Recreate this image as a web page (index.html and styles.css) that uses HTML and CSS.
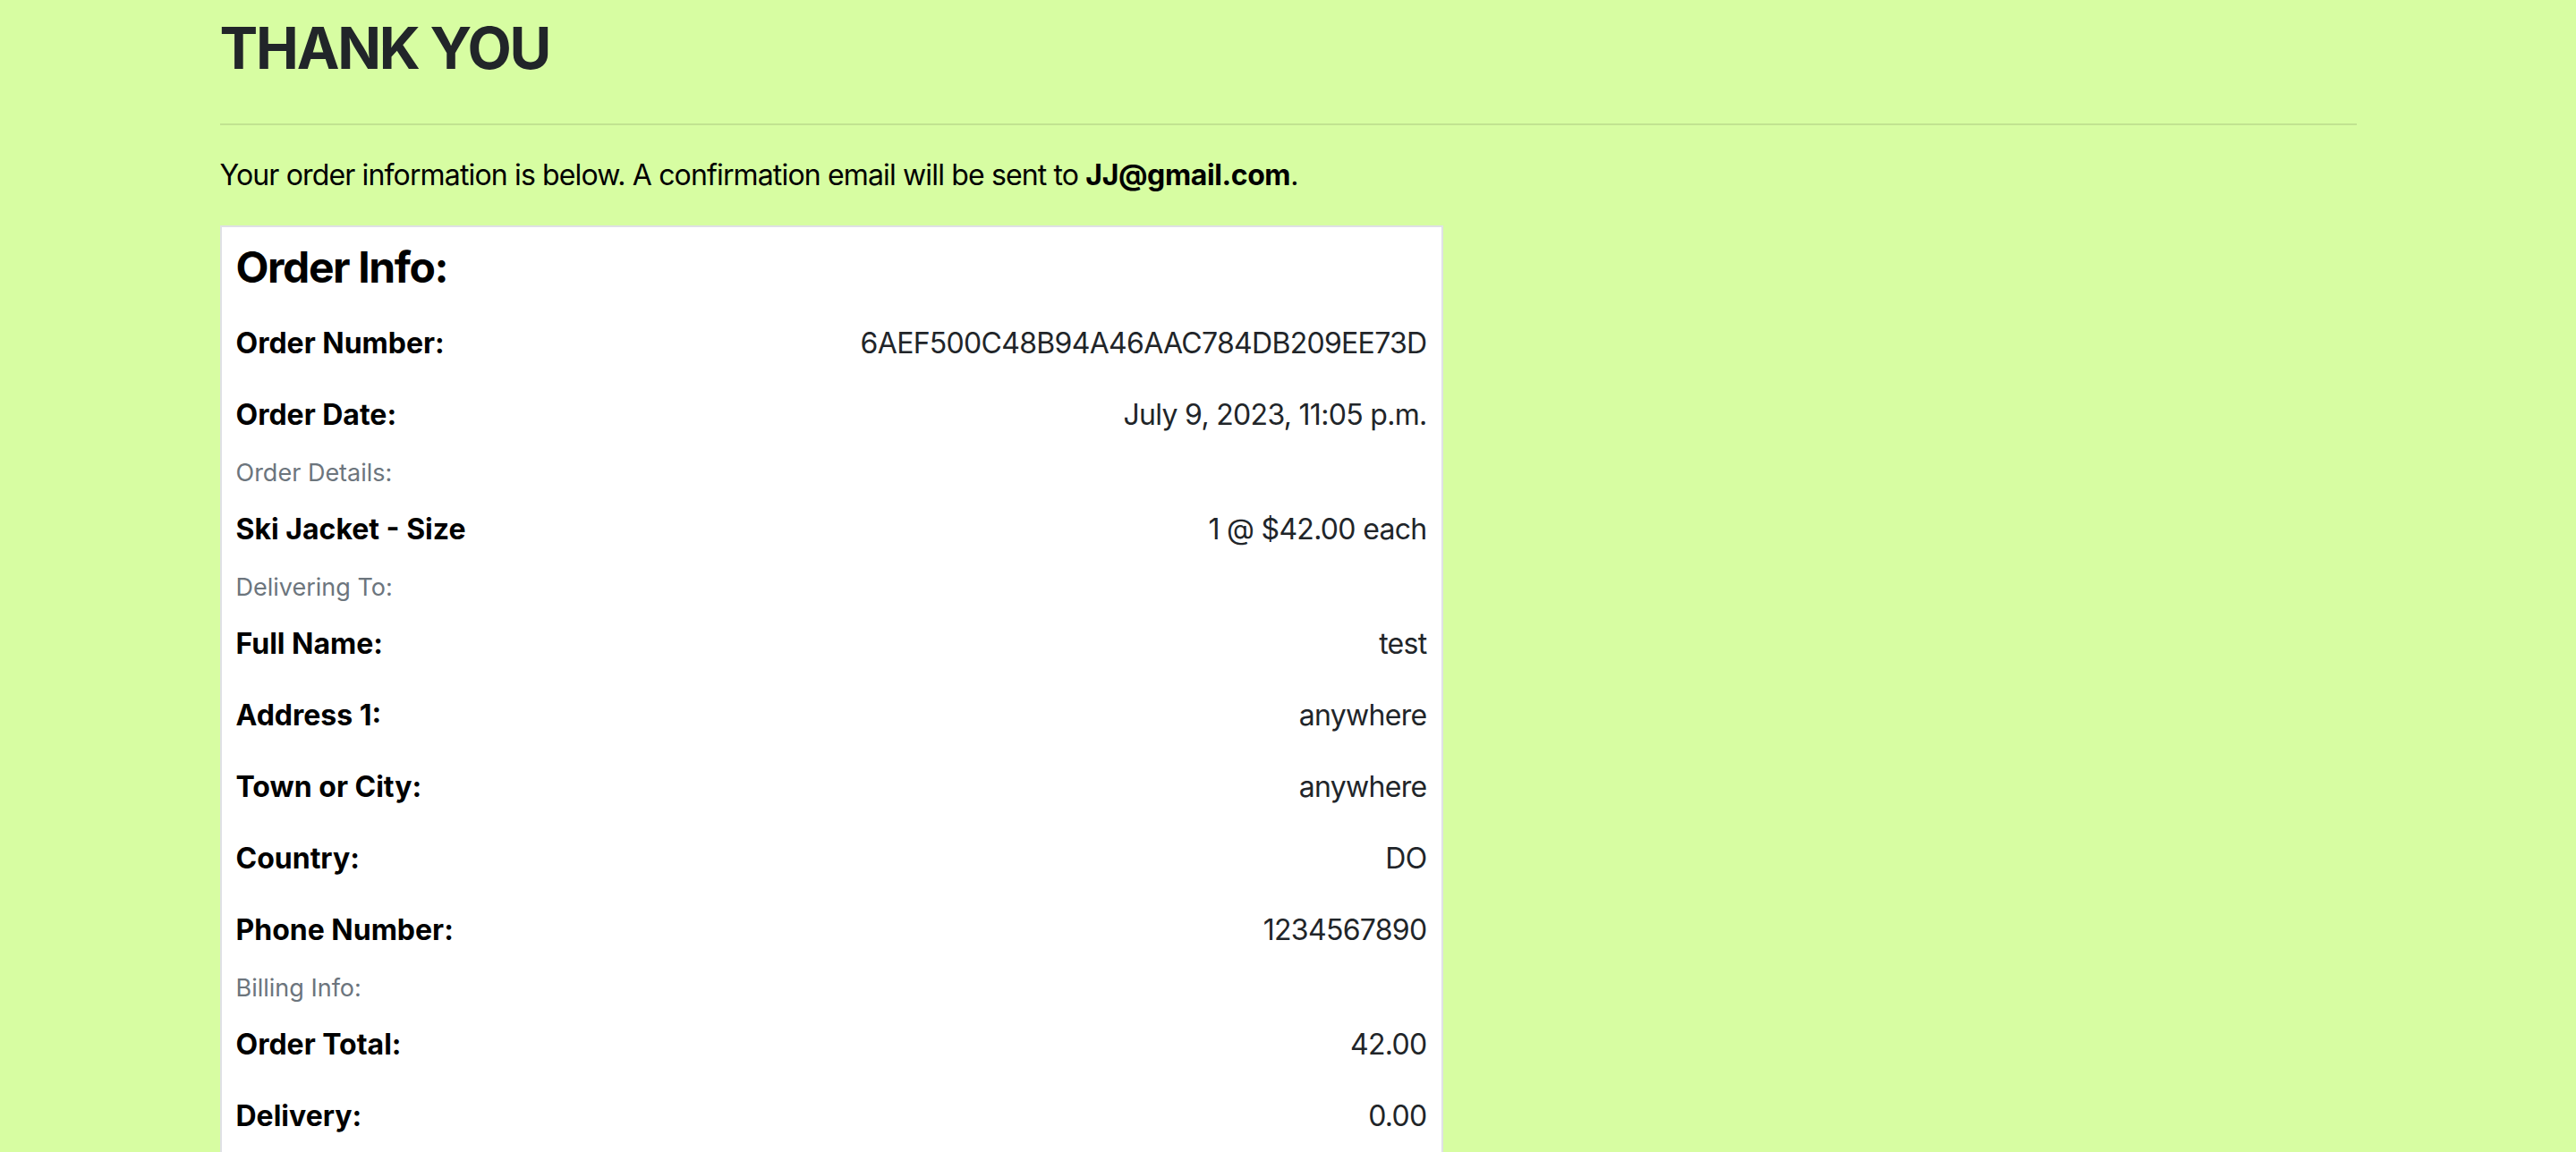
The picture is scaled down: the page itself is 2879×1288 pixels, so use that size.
FILE: index.html
```html
<!DOCTYPE html>
<html lang="en">
<head>
<meta charset="utf-8">
<title>Thank You</title>
<link rel="stylesheet" href="styles.css">
</head>
<body>
<main class="container">
  <h1 class="page-title">THANK YOU</h1>
  <hr class="divider">
  <p class="intro">Your order information is below. A confirmation email will be sent to <strong>JJ@gmail.com</strong>.</p>

  <section class="order-card">
    <h4 class="card-heading">Order Info:</h4>

    <div class="info-row"><span class="info-label">Order Number:</span><span class="info-value">6AEF500C48B94A46AAC784DB209EE73D</span></div>
    <div class="info-row"><span class="info-label">Order Date:</span><span class="info-value">July 9, 2023, 11:05 p.m.</span></div>

    <p class="section-label">Order Details:</p>
    <div class="info-row"><span class="info-label">Ski Jacket - Size</span><span class="info-value">1 @ $42.00 each</span></div>

    <p class="section-label">Delivering To:</p>
    <div class="info-row"><span class="info-label">Full Name:</span><span class="info-value">test</span></div>
    <div class="info-row"><span class="info-label">Address 1:</span><span class="info-value">anywhere</span></div>
    <div class="info-row"><span class="info-label">Town or City:</span><span class="info-value">anywhere</span></div>
    <div class="info-row"><span class="info-label">Country:</span><span class="info-value">DO</span></div>
    <div class="info-row"><span class="info-label">Phone Number:</span><span class="info-value">1234567890</span></div>

    <p class="section-label">Billing Info:</p>
    <div class="info-row"><span class="info-label">Order Total:</span><span class="info-value">42.00</span></div>
    <div class="info-row"><span class="info-label">Delivery:</span><span class="info-value">0.00</span></div>
  </section>
</main>
</body>
</html>
```

FILE: styles.css
```css
* {
  box-sizing: border-box;
}

html, body {
  margin: 0;
  padding: 0;
}

body {
  background: #d7fda2;
  font-family: Inter, "Noto Sans", "Liberation Sans", sans-serif;
  color: #000;
  font-size: 32px;
  line-height: 48px;
}

.container {
  width: 2388px;
  margin: 0 auto;
  padding-top: 15px;
}

.page-title {
  margin: 0;
  font-size: 64px;
  line-height: 77px;
  font-weight: 700;
  color: #212529;
  letter-spacing: -2.2px;
}

.divider {
  margin: 46px 0 32px;
  border: 0;
  border-top: 2px solid rgba(0, 0, 0, 0.1);
  height: 0;
}

.intro {
  margin: 0 0 32px;
  font-size: 32px;
  line-height: 48px;
  letter-spacing: -0.85px;
}

.intro strong {
  font-weight: 700;
  letter-spacing: -0.4px;
}

.order-card {
  width: 1367px;
  background: #fff;
  border: 2px solid #dfe1e5;
  padding: 16px 16px 32px;
  display: flex;
  flex-direction: column;
}

.card-heading {
  margin: 0 0 32px;
  font-size: 48px;
  line-height: 58px;
  font-weight: 700;
  letter-spacing: -1.4px;
}

.info-row {
  display: flex;
  justify-content: space-between;
  align-items: baseline;
  font-size: 32px;
  line-height: 48px;
}

.info-row + .info-row {
  margin-top: 32px;
}

.info-label {
  font-weight: 700;
  color: #000;
}

.info-value {
  color: #212529;
  text-align: right;
  letter-spacing: -0.7px;
}

.section-label {
  margin: 22px 0 20px;
  font-size: 27px;
  line-height: 38px;
  color: #6c757d;
}
```
